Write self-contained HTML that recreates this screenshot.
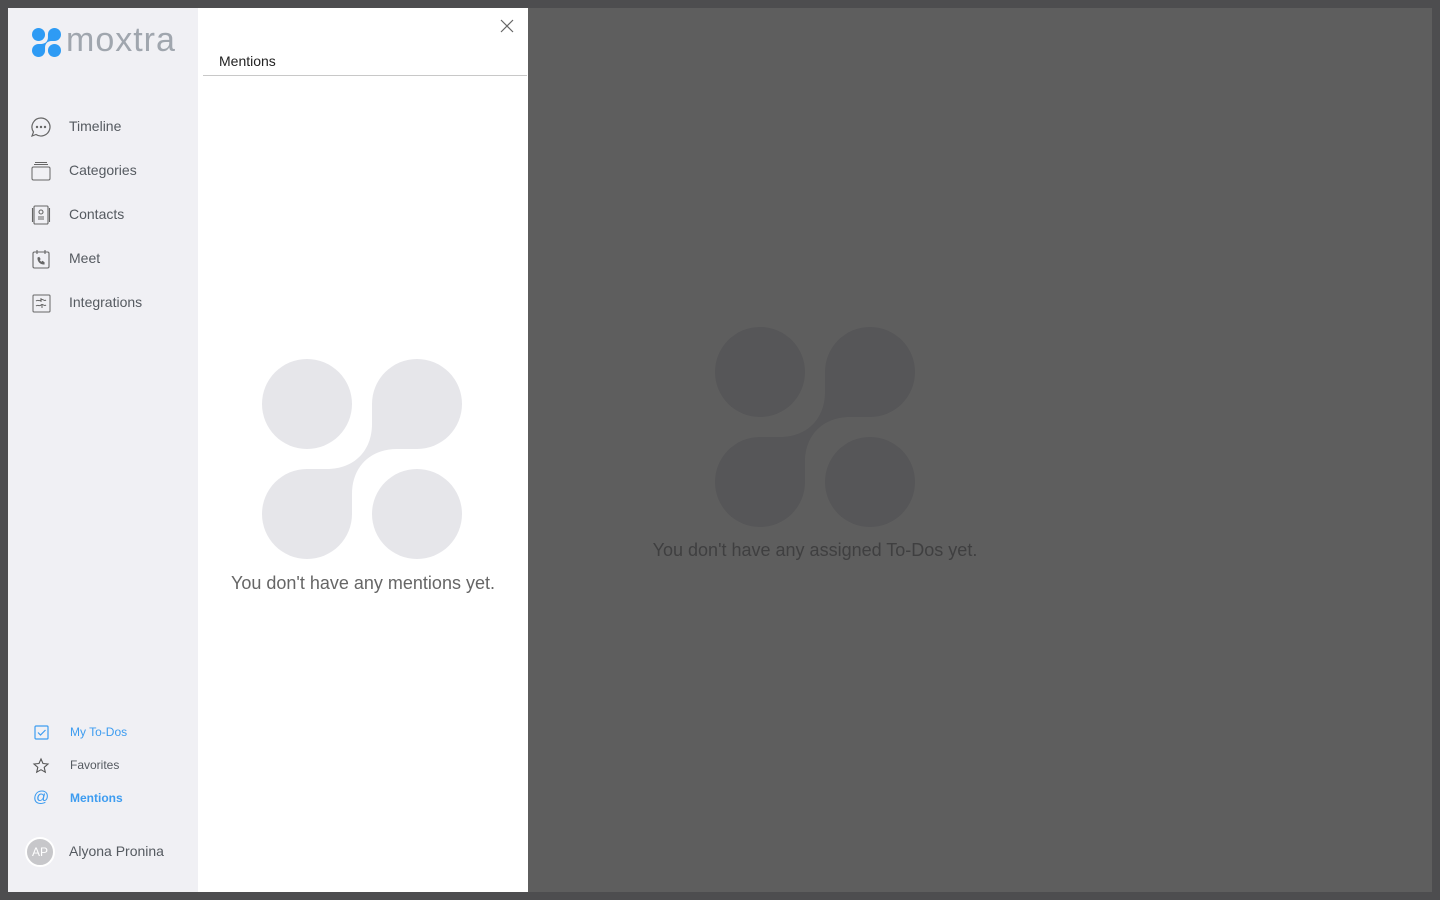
<!DOCTYPE html>
<html><head><meta charset="utf-8"><style>
*{margin:0;padding:0;box-sizing:border-box}
body{width:1440px;height:900px;background:#4d4d4f;font-family:"Liberation Sans",Arial,sans-serif;position:relative;overflow:hidden}
#main{position:absolute;left:8px;top:8px;width:1424px;height:884px;background:#5e5e5e}
#side{position:absolute;left:8px;top:8px;width:190px;height:884px;background:#f0f0f4}
#panel{position:absolute;left:198px;top:8px;width:330px;height:884px;background:#fff}
.nav{position:absolute;left:61px;font-size:14px;color:#555a60}
.nav2{position:absolute;left:62px;font-size:12px;color:#555a60}
svg{position:absolute;overflow:visible}
</style></head><body>
<svg width="0" height="0" style="position:absolute"><defs>
<g id="lg"><circle cx="45" cy="45" r="45"/><circle cx="155" cy="45" r="45"/><circle cx="45" cy="155" r="45"/><circle cx="155" cy="155" r="45"/>
<path d="M110,45 L110,65 C110,92 92,110 65,110 L45,110 L45,155 L90,155 L90,135 C90,108 108,90 135,90 L155,90 L155,45 Z"/></g></defs></svg>
<div id="main">
<svg style="left:707px;top:319px" width="200" height="200" fill="#565658"><use href="#lg"/></svg>
<div style="position:absolute;left:0;width:1614px;top:532px;text-align:center;font-size:18px;color:#3f3f40">You don't have any assigned To-Dos yet.</div>
</div>
<div id="side">
<svg style="left:24px;top:20px" width="28" height="28" fill="#2e9bf4"><g transform="scale(0.145)"><use href="#lg"/></g></svg>
<div style="position:absolute;left:58px;top:13px;font-size:34px;color:#a0a6ae;letter-spacing:1px">moxtra</div>
<svg style="left:22px;top:108px" width="22" height="22" fill="none" stroke="#666" stroke-width="1.2"><path d="M11,2 a9,9 0 1 1 -5,16.5 L2,20 L3.5,16 A9,9 0 0 1 11,2Z"/><circle cx="7" cy="11" r=".6" fill="#666"/><circle cx="11" cy="11" r=".6" fill="#666"/><circle cx="15" cy="11" r=".6" fill="#666"/></svg>
<div class="nav" style="top:110px">Timeline</div>
<svg style="left:23px;top:153px" width="22" height="22" fill="none" stroke="#666" stroke-width="1"><rect x="1" y="6" width="18" height="13" rx="1.5"/><path d="M3,3.5H17M4,1.5H16"/></svg>
<div class="nav" style="top:154px">Categories</div>
<svg style="left:24px;top:197px" width="20" height="22" fill="none" stroke="#666" stroke-width="1.1"><rect x="2" y="1" width="14" height="18" rx="1"/><path d="M0.5,3V17M17.5,3V17"/><circle cx="9" cy="7" r="2"/><path d="M6,12h6M6,14h6"/></svg>
<div class="nav" style="top:198px">Contacts</div>
<svg style="left:24px;top:241px" width="20" height="22" fill="none" stroke="#666" stroke-width="1.1"><rect x="1" y="3" width="16" height="16" rx="1.5"/><path d="M5,1V5M13,1V5"/><path d="M6,9c0,3 2,6 6,6l0-1.5-1.5-1-1,1c-1-.5-2-1.5-2.5-2.5l1-1-1-1.5Z" fill="#666"/></svg>
<div class="nav" style="top:242px">Meet</div>
<svg style="left:24px;top:285px" width="20" height="22" fill="none" stroke="#666" stroke-width="1"><rect x="1" y="2" width="17" height="17" rx="1"/><path d="M4,8c2-2 3,1 5-1s3,2 5,0M4,13c2-2 3,1 5-1s3,2 5,0M9,5v4M10,11v4"/></svg>
<div class="nav" style="top:286px">Integrations</div>
<svg style="left:26px;top:717px" width="16" height="16" fill="none" stroke="#3d9cf0" stroke-width="1.2"><rect x="1" y="1" width="13" height="13" rx="1"/><path d="M4,7.5l2.5,2.5l5-5"/></svg>
<div class="nav2" style="top:717px;color:#3d9cf0">My To-Dos</div>
<svg style="left:25px;top:750px" width="16" height="16" fill="none" stroke="#555" stroke-width="1.1"><path d="M8,1l2,4.5l5,.5l-3.8,3.3l1.1,4.9L8,11.7L3.7,14.2l1.1-4.9L1,6l5-.5Z"/></svg>
<div class="nav2" style="top:750px">Favorites</div>
<div style="position:absolute;left:25px;top:781px;font-size:16px;color:#3d9cf0">@</div>
<div class="nav2" style="top:783px;color:#3d9cf0;font-weight:bold">Mentions</div>
<div style="position:absolute;left:17px;top:829px;width:30px;height:30px;border-radius:50%;background:#c7c7ca;border:2px solid #fff;color:#fff;font-size:12px;text-align:center;line-height:26px">AP</div>
<div class="nav" style="top:835px">Alyona Pronina</div>
</div>
<div id="panel">
<svg style="left:302px;top:11px" width="14" height="14" stroke="#666" stroke-width="1.2"><path d="M1,1L13,13M13,1L1,13"/></svg>
<div style="position:absolute;left:21px;top:45px;font-size:14px;color:#222">Mentions</div>
<div style="position:absolute;left:5px;right:1px;top:67px;height:1px;background:#c8c8c8"></div>
<svg style="left:64px;top:351px" width="200" height="200" fill="#e6e6ea"><use href="#lg"/></svg>
<div style="position:absolute;left:0;width:330px;top:565px;text-align:center;font-size:18px;color:#666">You don't have any mentions yet.</div>
</div>
</body></html>
